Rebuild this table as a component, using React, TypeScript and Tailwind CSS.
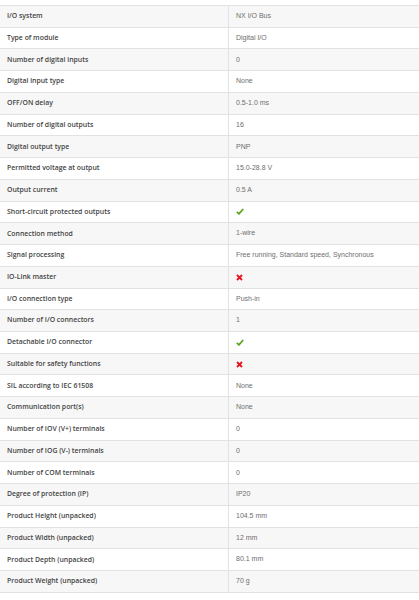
const ROWS: [string, string][] = [
  ['I/O system', 'NX I/O Bus'],
  ['Type of module', 'Digital I/O'],
  ['Number of digital inputs', '0'],
  ['Digital input type', 'None'],
  ['OFF/ON delay', '0.5-1.0 ms'],
  ['Number of digital outputs', '16'],
  ['Digital output type', 'PNP'],
  ['Permitted voltage at output', '15.0-28.8 V'],
  ['Output current', '0.5 A'],
  ['Short-circuit protected outputs', 'yes'],
  ['Connection method', '1-wire'],
  ['Signal processing', 'Free running, Standard speed, Synchronous'],
  ['IO-Link master', 'no'],
  ['I/O connection type', 'Push-in'],
  ['Number of I/O connectors', '1'],
  ['Detachable I/O connector', 'yes'],
  ['Suitable for safety functions', 'no'],
  ['SIL according to IEC 61508', 'None'],
  ['Communication port(s)', 'None'],
  ['Number of IOV (V+) terminals', '0'],
  ['Number of IOG (V-) terminals', '0'],
  ['Number of COM terminals', '0'],
  ['Degree of protection (IP)', 'IP20'],
  ['Product Height (unpacked)', '104.5 mm'],
  ['Product Width (unpacked)', '12 mm'],
  ['Product Depth (unpacked)', '80.1 mm'],
  ['Product Weight (unpacked)', '70 g'],
];

function Check() {
  return (
    <svg width="8" height="7" viewBox="0 0 8 7">
      <path d="M0.8 3.8 L3 5.8 L7.2 1" fill="none" stroke="#5ea51f" strokeWidth="1.8" />
    </svg>
  );
}

function Cross() {
  return (
    <svg width="7" height="7" viewBox="0 0 7 7">
      <path d="M1 1 L6 6 M6 1 L1 6" fill="none" stroke="#e8141c" strokeWidth="1.8" />
    </svg>
  );
}

export default function App() {
  return (
    <div className="w-[419px] h-[600px] bg-white pt-[5px]" style={{ fontFamily: '"Liberation Sans", Arial, sans-serif' }}>
      <div className="border-t border-[#e2e2e2]">
        {ROWS.map(([label, value], i) => (
          <div key={label} className={`flex h-[21.74px] border-b border-[#e2e2e2] ${i % 2 === 0 ? 'bg-[#f7f7f7]' : 'bg-white'}`}>
            <div className="w-[229px] flex items-center pl-[7px] text-[6.9px] font-semibold text-[#444] border-r border-[#e2e2e2]" style={{ fontFamily: '"Open Sans", sans-serif' }}>
              {label}
            </div>
            <div className="flex-1 flex items-center pl-[7px] text-[7px] text-[#6e6e6e]">
              {value === 'yes' ? <Check /> : value === 'no' ? <Cross /> : value}
            </div>
          </div>
        ))}
      </div>
    </div>
  );
}
